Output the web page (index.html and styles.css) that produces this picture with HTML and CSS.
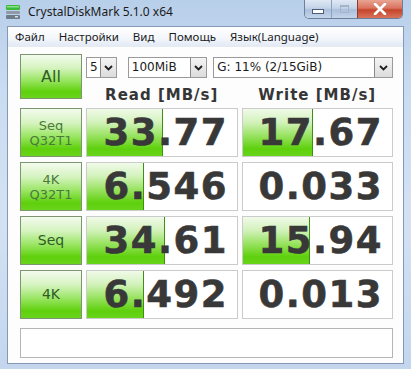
FILE: index.html
```html
<!DOCTYPE html>
<html lang="ru">
<head>
    <meta charset="UTF-8">
    <title>CrystalDiskMark 5.1.0 x64</title>
    <link rel="stylesheet" href="styles.css">
</head>
<body>
    <div class="window">
        <div class="titlebar">
            <svg class="app-icon" width="14" height="14" viewBox="0 0 14 14">
                <rect x="0" y="0" width="14" height="5" rx="1" fill="#3cb93c"/>
                <rect x="1" y="1" width="12" height="1.5" fill="#8be08b"/>
                <rect x="0" y="6" width="14" height="3" rx="1" fill="#8f9aa6"/>
                <rect x="0" y="10" width="14" height="4" rx="1" fill="#6f7b88"/>
                <rect x="9" y="11" width="3" height="1.5" fill="#d8dee5"/>
            </svg>
            <span class="title">CrystalDiskMark 5.1.0 x64</span>
            <div class="caption-buttons">
                <span class="cap min"><i></i></span>
                <span class="cap max"><i></i></span>
                <span class="cap close">
                    <svg width="14" height="12" viewBox="0 0 14 12">
                        <path d="M2 1 L12 11 M12 1 L2 11" stroke="#ffffff" stroke-width="2.6" stroke-linecap="round"/>
                    </svg>
                </span>
            </div>
        </div>

        <div class="client">
            <div class="menubar">
                <span>Файл</span>
                <span>Настройки</span>
                <span>Вид</span>
                <span>Помощь</span>
                <span>Язык(Language)</span>
            </div>

            <div class="main">
                <div class="grid">
                    <div class="label all">All</div>
                    <div class="head">
                        <div class="selects">
                            <div class="combo count"><span>5</span><b class="arrow"><svg width="9" height="6" viewBox="0 0 9 6"><path d="M1 1 L4.5 4.5 L8 1" fill="none" stroke="#1e1e1e" stroke-width="1.8"/></svg></b></div>
                            <div class="combo size"><span>100MiB</span><b class="arrow"><svg width="9" height="6" viewBox="0 0 9 6"><path d="M1 1 L4.5 4.5 L8 1" fill="none" stroke="#1e1e1e" stroke-width="1.8"/></svg></b></div>
                            <div class="combo drive"><span>G: 11% (2/15GiB)</span><b class="arrow"><svg width="9" height="6" viewBox="0 0 9 6"><path d="M1 1 L4.5 4.5 L8 1" fill="none" stroke="#1e1e1e" stroke-width="1.8"/></svg></b></div>
                        </div>
                        <div class="headers">
                            <span>Read [MB/s]</span>
                            <span>Write [MB/s]</span>
                        </div>
                    </div>

                    <div class="label small">Seq<br>Q32T1</div>
                    <div class="value" style="--w: 50%">33.77</div>
                    <div class="value" style="--w: 46%">17.67</div>

                    <div class="label small">4K<br>Q32T1</div>
                    <div class="value" style="--w: 37%">6.546</div>
                    <div class="value" style="--w: 0%">0.033</div>

                    <div class="label">Seq</div>
                    <div class="value" style="--w: 51%">34.61</div>
                    <div class="value" style="--w: 44%">15.94</div>

                    <div class="label">4K</div>
                    <div class="value" style="--w: 37%">6.492</div>
                    <div class="value" style="--w: 0%">0.013</div>
                </div>

                <div class="comment"></div>
            </div>
        </div>
    </div>
</body>
</html>
```

FILE: styles.css
```css
body {
    margin: 0;
    font-family: "DejaVu Sans", Verdana, sans-serif;
}
.window {
    width: 411px;
    height: 369px;
    display: flex;
    flex-direction: column;
    background: linear-gradient(to bottom, #b8cfea 0%, #cadcf1 25%, #d3e2f3 60%, #c3d6ee 100%);
    overflow: hidden;
}
.titlebar {
    height: 26px;
    flex: none;
    display: flex;
    align-items: flex-start;
    padding-left: 6px;
}
.app-icon {
    margin-top: 5px;
}
.title {
    margin-left: 8px;
    margin-top: 4px;
    font-family: "Noto Sans", "Open Sans", sans-serif;
    font-size: 12px;
    line-height: 16px;
    color: #1b1b1b;
}
.caption-buttons {
    margin-left: auto;
    margin-right: 8px;
    display: flex;
    height: 18px;
    border: 1px solid #6e7f99;
    border-top: none;
    border-radius: 0 0 5px 5px;
    overflow: hidden;
}
.cap {
    display: flex;
    align-items: center;
    justify-content: center;
    background: linear-gradient(to bottom, #dfe8f4 0%, #c3d3e8 45%, #aabfdb 55%, #c4d5ea 100%);
    border-left: 1px solid #8ea2bf;
}
.cap:first-child {
    border-left: none;
}
.cap.min {
    width: 26px;
}
.cap.min i {
    width: 10px;
    height: 3px;
    margin-top: 5px;
    background: #ffffff;
    border: 1px solid #4b5d78;
}
.cap.max {
    width: 25px;
}
.cap.max i {
    width: 7px;
    height: 5px;
    border: 1px solid #a5b4c9;
    border-top-width: 2px;
}
.cap.close {
    width: 44px;
    border-left-color: #8c3b30;
    background: linear-gradient(to bottom, #e9a493 0%, #d9735e 45%, #c5452c 55%, #d8735a 100%);
}
.client {
    flex: 1;
    margin: 0 7px 5px;
    border: 1px solid #8598b6;
    background: #fdfdfd;
    display: flex;
    flex-direction: column;
}
.menubar {
    height: 19px;
    display: flex;
    align-items: center;
    padding-left: 0;
    background: linear-gradient(to bottom, #ffffff 0%, #f3f6fb 60%, #e3eaf5 100%);
    border-bottom: 1px solid #e6ebf2;
    font-family: "Noto Sans", "Open Sans", sans-serif;
    font-size: 11.5px;
    color: #1b1b1b;
}
.menubar span {
    padding: 0 7px;
}
.main {
    padding: 7px 0 0 12px;
}
.grid {
    display: grid;
    grid-template-columns: 62px 152px 151px;
    grid-template-rows: repeat(5, 49px);
    column-gap: 4px;
    row-gap: 5px;
}
.label {
    border: 1px solid #7d9671;
    background: linear-gradient(to bottom, #f3fbee 0%, #d5f3bf 30%, #9be665 58%, #5fd00c 85%, #6ad41c 100%);
    display: flex;
    align-items: center;
    justify-content: center;
    text-align: center;
    font-size: 14px;
    color: #2f5c25;
    line-height: 15px;
}
.label.all {
    height: 45px;
    font-size: 16px;
    box-sizing: border-box;
}
.label.small {
    font-size: 13px;
    color: #4a7a3a;
}
.head {
    grid-column: 2 / 4;
    display: flex;
    flex-direction: column;
}
.selects {
    display: flex;
    margin-top: 3px;
    height: 21px;
}
.combo {
    display: flex;
    box-sizing: border-box;
    border: 1px solid #9a9a9a;
    background: #ffffff;
    font-size: 12px;
    color: #1b1b1b;
}
.combo span {
    flex: 1;
    padding-left: 3px;
    line-height: 19px;
}
.combo.count {
    width: 31px;
}
.combo.size {
    width: 80px;
    margin-left: 11px;
}
.combo.drive {
    width: 181px;
    margin-left: 6px;
}
.arrow {
    width: 15px;
    display: flex;
    align-items: center;
    justify-content: center;
    border-left: 1px solid #8a8a8a;
    background: linear-gradient(to bottom, #f4f4f4, #dcdcdc);
}
.combo.drive .arrow {
    width: 17px;
}
.headers {
    display: flex;
    padding-top: 8px;
    column-gap: 4px;
}
.headers span {
    width: 152px;
    text-align: center;
    font-weight: bold;
    font-size: 15px;
    letter-spacing: 1px;
    color: #363636;
}
.value {
    position: relative;
    z-index: 0;
    border: 1px solid #cbcbcb;
    background: #ffffff;
    display: flex;
    align-items: center;
    justify-content: flex-end;
    padding-right: 9px;
    font-weight: bold;
    font-size: 37px;
    letter-spacing: 1.5px;
    color: #383838;
    -webkit-text-stroke: 0.6px #383838;
}
.value::before {
    content: "";
    position: absolute;
    z-index: -1;
    left: 0;
    top: 0;
    bottom: 0;
    width: var(--w);
    background: linear-gradient(to bottom, #f0fae9 0%, #d3f2bc 28%, #96e25d 58%, #5ed00c 85%, #68d41b 100%);
    border-right: 1px solid #3f8f14;
}
.value[style="--w: 0%"]::before {
    display: none;
}
.comment {
    margin-top: 9px;
    width: 373px;
    height: 30px;
    box-sizing: border-box;
    border: 1px solid #b5b5b5;
    background: #ffffff;
}
```
